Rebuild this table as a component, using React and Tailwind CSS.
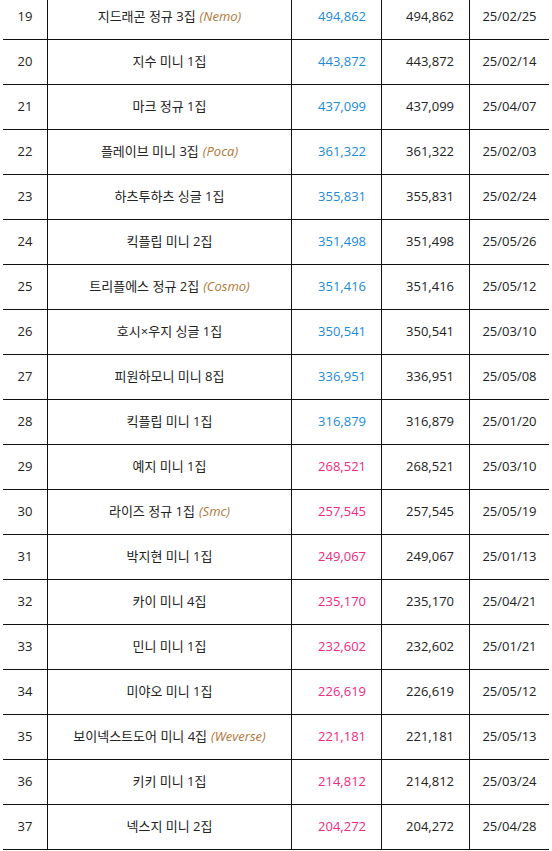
import React from 'react';

const rows = [
  [19, '지드래곤 정규 3집', 'Nemo', '494,862', '25/02/25', 'b'],
  [20, '지수 미니 1집', null, '443,872', '25/02/14', 'b'],
  [21, '마크 정규 1집', null, '437,099', '25/04/07', 'b'],
  [22, '플레이브 미니 3집', 'Poca', '361,322', '25/02/03', 'b'],
  [23, '하츠투하츠 싱글 1집', null, '355,831', '25/02/24', 'b'],
  [24, '킥플립 미니 2집', null, '351,498', '25/05/26', 'b'],
  [25, '트리플에스 정규 2집', 'Cosmo', '351,416', '25/05/12', 'b'],
  [26, '호시×우지 싱글 1집', null, '350,541', '25/03/10', 'b'],
  [27, '피원하모니 미니 8집', null, '336,951', '25/05/08', 'b'],
  [28, '킥플립 미니 1집', null, '316,879', '25/01/20', 'b'],
  [29, '예지 미니 1집', null, '268,521', '25/03/10', 'p'],
  [30, '라이즈 정규 1집', 'Smc', '257,545', '25/05/19', 'p'],
  [31, '박지현 미니 1집', null, '249,067', '25/01/13', 'p'],
  [32, '카이 미니 4집', null, '235,170', '25/04/21', 'p'],
  [33, '민니 미니 1집', null, '232,602', '25/01/21', 'p'],
  [34, '미야오 미니 1집', null, '226,619', '25/05/12', 'p'],
  [35, '보이넥스트도어 미니 4집', 'Weverse', '221,181', '25/05/13', 'p'],
  [36, '키키 미니 1집', null, '214,812', '25/03/24', 'p'],
  [37, '넥스지 미니 2집', null, '204,272', '25/04/28', 'p'],
];

export default function App() {
  return (
    <div className="bg-white h-[851px] overflow-hidden text-[13px] text-[#222] font-['Open_Sans','Noto_Sans_CJK_KR',sans-serif]">
      <div className="mx-[3px] w-[546px] mt-[-5px]">
        {rows.map(([rank, title, label, sales, date, tone]) => (
          <div key={rank} className="flex h-[45px] border-b border-[#111]">
            <div className="w-[45px] border-r border-[#111] flex items-center justify-center">{rank}</div>
            <div className="w-[244px] border-r border-[#111] flex items-center justify-center">
              <span>{title}</span>
              {label && <span className="ml-1 italic text-[#b0783a]">({label})</span>}
            </div>
            <div
              className={
                tone === 'b'
                  ? 'w-[90px] border-r border-[#111] flex items-center justify-end pr-[15px] text-[#1b8ad8]'
                  : 'w-[90px] border-r border-[#111] flex items-center justify-end pr-[15px] text-[#ee2a82]'
              }
            >
              {sales}
            </div>
            <div className="w-[88px] border-r border-[#111] flex items-center justify-end pr-[15px]">{sales}</div>
            <div className="w-[79px] flex items-center justify-center">{date}</div>
          </div>
        ))}
      </div>
    </div>
  );
}
